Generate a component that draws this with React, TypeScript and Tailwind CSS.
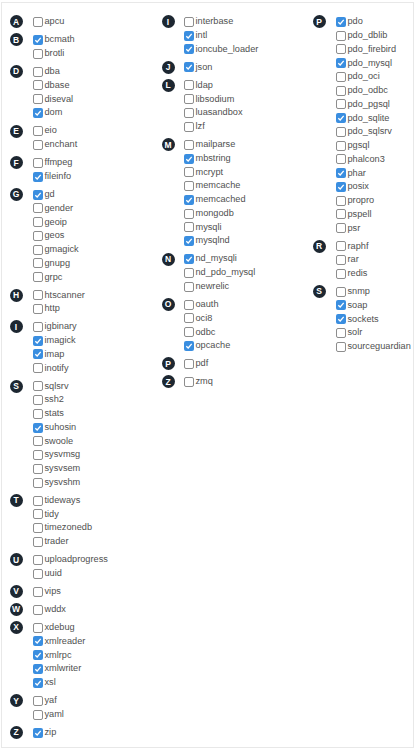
import React from "react";

type Item = [string, boolean];
type Group = { letter: string; items: Item[] };

const col1: Group[] = [
  { letter: "A", items: [["apcu", false]] },
  { letter: "B", items: [["bcmath", true], ["brotli", false]] },
  { letter: "D", items: [["dba", false], ["dbase", false], ["diseval", false], ["dom", true]] },
  { letter: "E", items: [["eio", false], ["enchant", false]] },
  { letter: "F", items: [["ffmpeg", false], ["fileinfo", true]] },
  {
    letter: "G",
    items: [["gd", true], ["gender", false], ["geoip", false], ["geos", false], ["gmagick", false], ["gnupg", false], ["grpc", false]],
  },
  { letter: "H", items: [["htscanner", false], ["http", false]] },
  { letter: "I", items: [["igbinary", false], ["imagick", true], ["imap", true], ["inotify", false]] },
  {
    letter: "S",
    items: [["sqlsrv", false], ["ssh2", false], ["stats", false], ["suhosin", true], ["swoole", false], ["sysvmsg", false], ["sysvsem", false], ["sysvshm", false]],
  },
  { letter: "T", items: [["tideways", false], ["tidy", false], ["timezonedb", false], ["trader", false]] },
  { letter: "U", items: [["uploadprogress", false], ["uuid", false]] },
  { letter: "V", items: [["vips", false]] },
  { letter: "W", items: [["wddx", false]] },
  { letter: "X", items: [["xdebug", false], ["xmlreader", true], ["xmlrpc", true], ["xmlwriter", true], ["xsl", true]] },
  { letter: "Y", items: [["yaf", false], ["yaml", false]] },
  { letter: "Z", items: [["zip", true]] },
];

const col2: Group[] = [
  { letter: "I", items: [["interbase", false], ["intl", true], ["ioncube_loader", true]] },
  { letter: "J", items: [["json", true]] },
  { letter: "L", items: [["ldap", false], ["libsodium", false], ["luasandbox", false], ["lzf", false]] },
  {
    letter: "M",
    items: [["mailparse", false], ["mbstring", true], ["mcrypt", false], ["memcache", false], ["memcached", true], ["mongodb", false], ["mysqli", false], ["mysqlnd", true]],
  },
  { letter: "N", items: [["nd_mysqli", true], ["nd_pdo_mysql", false], ["newrelic", false]] },
  { letter: "O", items: [["oauth", false], ["oci8", false], ["odbc", false], ["opcache", true]] },
  { letter: "P", items: [["pdf", false]] },
  { letter: "Z", items: [["zmq", false]] },
];

const col3: Group[] = [
  {
    letter: "P",
    items: [
      ["pdo", true], ["pdo_dblib", false], ["pdo_firebird", false], ["pdo_mysql", true], ["pdo_oci", false], ["pdo_odbc", false],
      ["pdo_pgsql", false], ["pdo_sqlite", true], ["pdo_sqlsrv", false], ["pgsql", false], ["phalcon3", false], ["phar", true],
      ["posix", true], ["propro", false], ["pspell", false], ["psr", false],
    ],
  },
  { letter: "R", items: [["raphf", false], ["rar", false], ["redis", false]] },
  { letter: "S", items: [["snmp", false], ["soap", true], ["sockets", true], ["solr", false], ["sourceguardian", false]] },
];

function Box({ checked }: { checked: boolean }) {
  if (checked) {
    return (
      <span className="w-[10px] h-[10px] shrink-0 rounded-[2px] bg-[#3a8ee0] flex items-center justify-center">
        <svg width="8" height="8" viewBox="0 0 8 8">
          <path d="M1.3 4.2 L3.2 6 L6.7 1.9" fill="none" stroke="#fff" strokeWidth="1.3" />
        </svg>
      </span>
    );
  }
  return <span className="w-[10px] h-[10px] shrink-0 rounded-[2px] border border-[#8d8d8d] bg-white" />;
}

// one letter group: dark badge beside its list of checkboxes
function Column({ groups, listGap }: { groups: Group[]; listGap: string }) {
  return (
    <div className="flex flex-col gap-[4.3px]">
      {groups.map((g, gi) => (
        <div key={gi} className="flex items-start">
          <div className="h-[13.75px] flex items-center shrink-0 -ml-[0.5px]">
            <span className="w-[13px] h-[13px] rounded-full bg-[#1d2731] text-white text-[8.5px] font-bold flex items-center justify-center leading-none">
              {g.letter}
            </span>
          </div>
          <div className={`flex flex-col ${listGap}`}>
            {g.items.map(([name, checked]) => (
              <div key={name} className="h-[13.75px] flex items-center gap-[2px]">
                <Box checked={checked} />
                <span className="text-[9.2px] text-[#505050] leading-none whitespace-nowrap">{name}</span>
              </div>
            ))}
          </div>
        </div>
      ))}
    </div>
  );
}

export default function App() {
  return (
    <div className="w-[419px] h-[750px] bg-white" style={{ fontFamily: '"Liberation Sans", Arial, sans-serif' }}>
      <div className="ml-[1px] mt-[2px] w-[413px] h-[746px] border border-[#e8e8e8] pt-[12px] pl-[8px]">
        <div className="grid grid-cols-[152px_151px_1fr]">
          <Column groups={col1} listGap="ml-[10px]" />
          <Column groups={col2} listGap="ml-[9px]" />
          <Column groups={col3} listGap="ml-[10px]" />
        </div>
      </div>
    </div>
  );
}
